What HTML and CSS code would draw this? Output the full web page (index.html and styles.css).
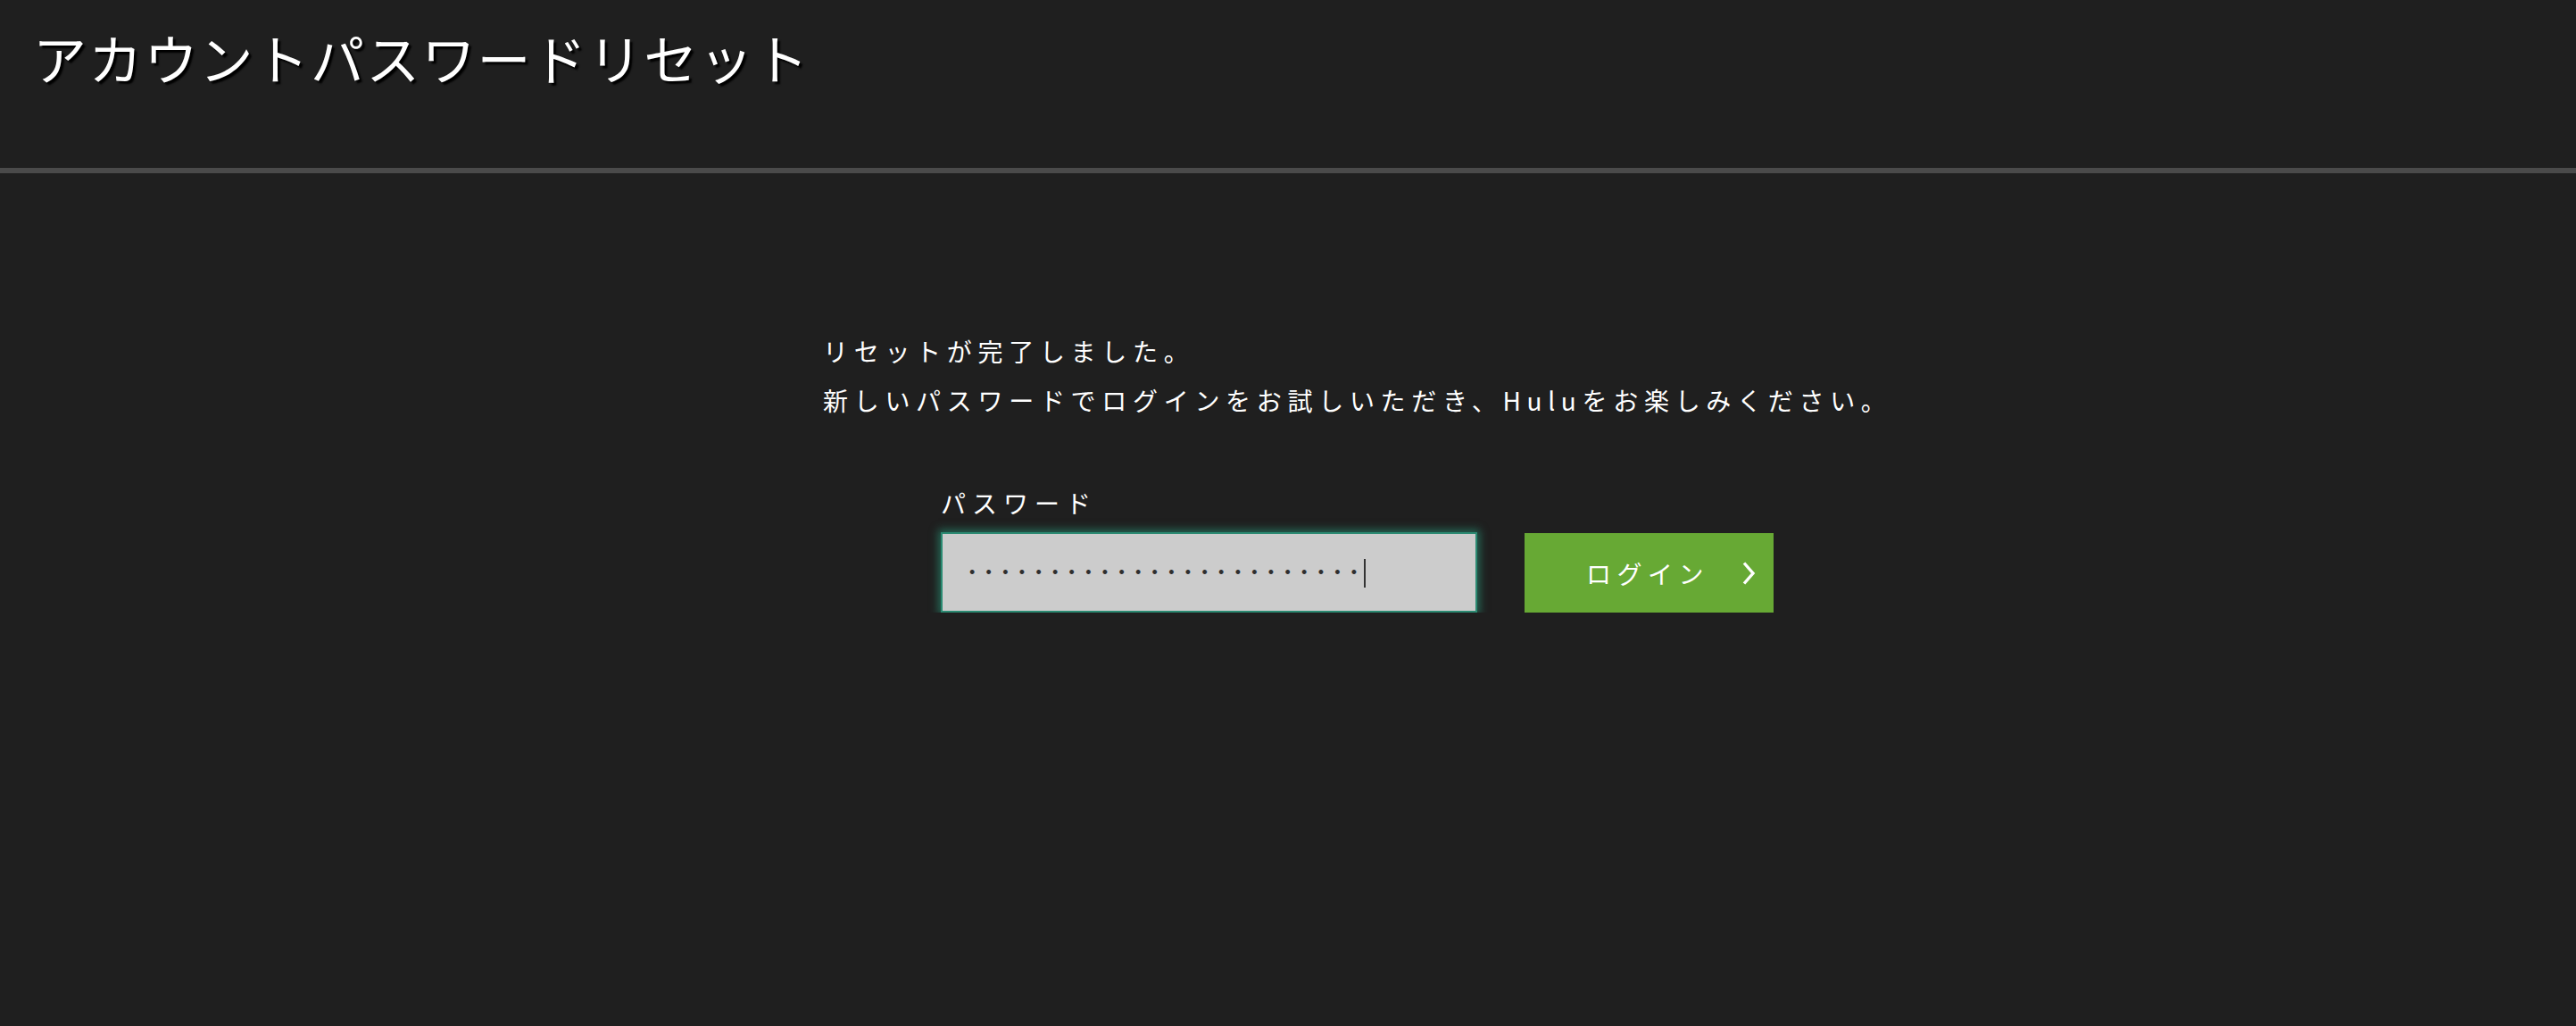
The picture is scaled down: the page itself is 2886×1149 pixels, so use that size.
FILE: index.html
```html
<!DOCTYPE html>
<html lang="ja">
<head>
    <meta charset="UTF-8">
    <meta name="viewport" content="width=device-width, initial-scale=1.0">
    <title>アカウントパスワードリセット</title>
    <link rel="stylesheet" href="styles.css">
</head>
<body>
    <header class="page-header">
        <h1>アカウントパスワードリセット</h1>
    </header>

    <!-- Reset complete message + login form -->
    <main class="reset-content">
        <p class="message">リセットが完了しました。<br>新しいパスワードでログインをお試しいただき、Huluをお楽しみください。</p>

        <form class="login-form" onsubmit="return false;">
            <label class="field-label" for="password">パスワード</label>
            <div class="form-row">
                <div class="field">
                    <input type="password" id="password" class="password-input" value="passwordpassword12345678">
                    <span class="caret"></span>
                </div>
                <button type="submit" class="login-button">
                    <span>ログイン</span>
                    <svg class="chevron" width="16" height="28" viewBox="0 0 16 28">
                        <path d="M3 2.5 L13 14 L3 25.5" fill="none" stroke="#fff" stroke-width="3.4"/>
                    </svg>
                </button>
            </div>
        </form>
    </main>
</body>
</html>
```

FILE: styles.css
```css
body {
    margin: 0;
    padding: 0;
    background-color: #1f1f1f;
    color: #fff;
    font-family: "Noto Sans CJK JP", "Noto Sans", sans-serif;
}
.page-header {
    height: 168px;
    padding: 20px 37px 0;
    border-bottom: 6px solid #4a4a4a;
}
.page-header h1 {
    margin: 0;
    font-size: 60px;
    font-weight: 400;
    line-height: 87px;
    letter-spacing: 2.2px;
    text-shadow: 3px 3px 2px #000;
}
.reset-content {
    padding: 172px 0 0 922px;
}
.message {
    margin: 0;
    font-size: 28px;
    line-height: 55px;
    letter-spacing: 6.7px;
    white-space: nowrap;
}
.login-form {
    margin: 67px 0 0 132px;
}
.field-label {
    display: block;
    font-size: 28px;
    line-height: 40px;
    letter-spacing: 7px;
    margin-bottom: 13px;
}
.form-row {
    display: flex;
    align-items: flex-start;
}
.field {
    position: relative;
}
.password-input {
    display: block;
    width: 601px;
    height: 90px;
    box-sizing: border-box;
    margin: 0;
    padding: 0 0 0 30px;
    border: 2px solid #2b8a72;
    background-color: #cccccc;
    color: #2e2e2e;
    font-family: "Liberation Sans", sans-serif;
    font-size: 18px;
    letter-spacing: 12.3px;
    box-shadow: 0 0 9px 3px rgba(40, 150, 120, 0.6);
    outline: none;
}
.caret {
    position: absolute;
    left: 474px;
    top: 30px;
    width: 2px;
    height: 32px;
    background-color: #333;
}
.login-button {
    display: flex;
    align-items: center;
    width: 279px;
    height: 89px;
    margin: 1px 0 0 53px;
    padding: 0 0 0 69px;
    box-sizing: border-box;
    border: none;
    background-color: #67a934;
    color: #fff;
    font-family: "Noto Sans CJK JP", sans-serif;
    font-size: 28px;
    letter-spacing: 6.5px;
    cursor: pointer;
}
.login-button:hover {
    background-color: #74b83f;
}
.chevron {
    margin-left: 36px;
}
```
